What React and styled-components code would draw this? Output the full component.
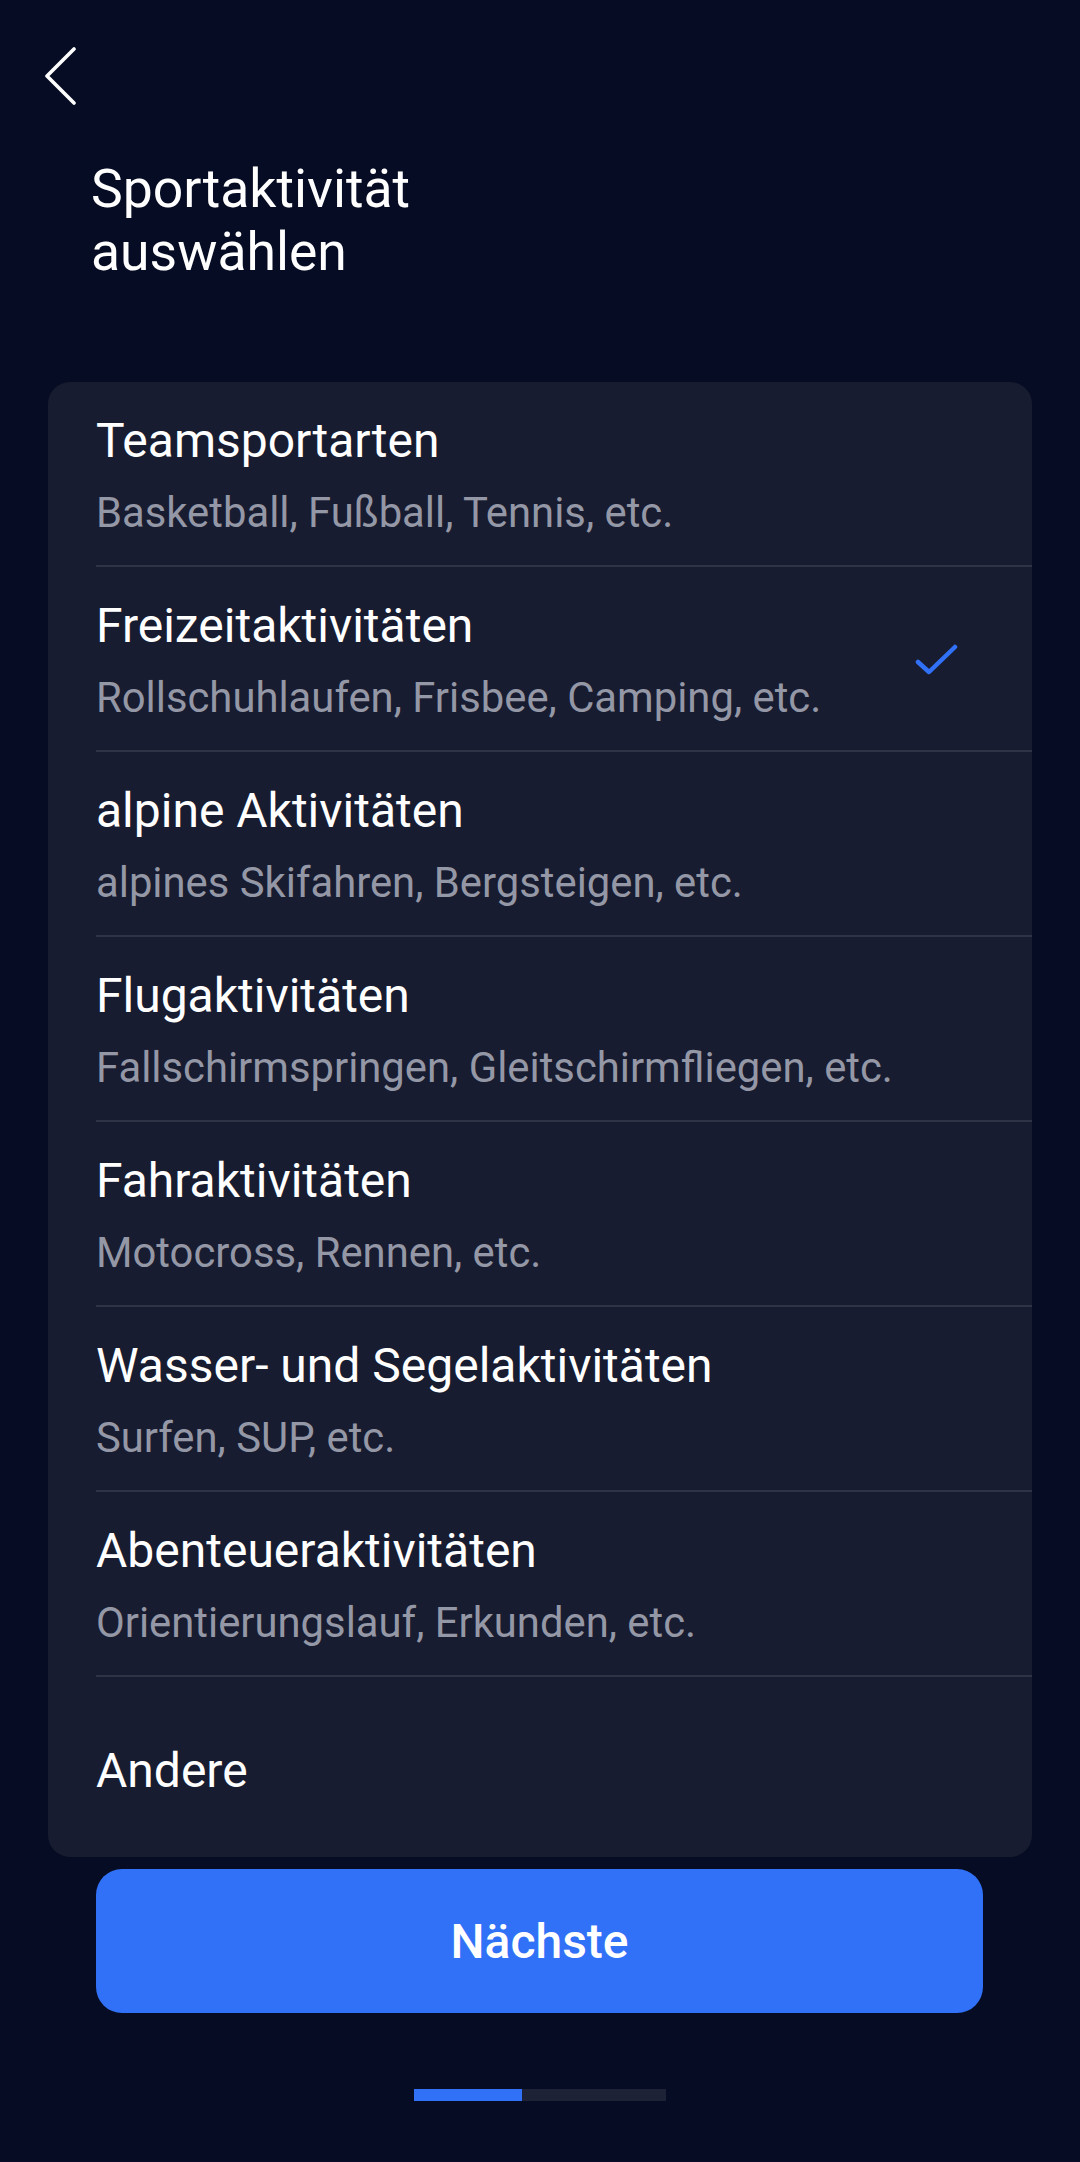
import React from "react"
import styled, { createGlobalStyle } from "styled-components"

const colors = {
  bg: "#060c23",
  card: "#181c30",
  divider: "#2e3346",
  white: "#ffffff",
  gray: "#9497a5",
  blue: "#3171f7",
  track: "#1e2236",
}

const GlobalStyle = createGlobalStyle`
  html, body {
    margin: 0;
    padding: 0;
    background: ${colors.bg};
  }
  body {
    font-family: Roboto, "Noto Sans", "Liberation Sans", sans-serif;
    color: ${colors.white};
  }
  * { box-sizing: border-box; }
`

const Page = styled.div`
  width: 1080px;
  min-height: 2162px;
  background: ${colors.bg};
  display: flex;
  flex-direction: column;
  padding: 48px 48px 0;

  & > * {
    flex-shrink: 0;
  }
`

const BackButton = styled.button`
  width: 40px;
  height: 56px;
  padding: 0;
  margin-left: -7px;
  border: none;
  background: transparent;
  display: flex;
  align-items: center;
  justify-content: center;
  cursor: pointer;
`

const Title = styled.h1`
  margin: 53px 0 0 43px;
  font-size: 53.5px;
  line-height: 63px;
  font-weight: 400;
  color: ${colors.white};
`

const Card = styled.div`
  margin-top: 99px;
  background: ${colors.card};
  border-radius: 22px;
  display: flex;
  flex-direction: column;
  padding-left: 48px;
`

const Row = styled.div`
  position: relative;
  display: flex;
  flex-direction: column;
  justify-content: ${(p) => (p.$single ? "center" : "flex-start")};
  height: ${(p) => (p.$single ? "180px" : "185px")};
  padding: ${(p) => (p.$single ? "8px 0 0" : "31px 0 0")};
  border-bottom: ${(p) => (p.$last ? "none" : `2px solid ${colors.divider}`)};
`

const RowTitle = styled.div`
  font-size: 48px;
  line-height: 56px;
  color: ${colors.white};
`

const RowSub = styled.div`
  margin-top: 20px;
  font-size: 41.8px;
  line-height: 48px;
  color: ${colors.gray};
`

const Check = styled.svg`
  position: absolute;
  right: 73px;
  top: 76px;
`

const NextButton = styled.button`
  margin: 12px 49px 0 48px;
  height: 144px;
  border: none;
  border-radius: 26px;
  background: ${colors.blue};
  color: ${colors.white};
  font-family: Roboto, "Noto Sans", "Liberation Sans", sans-serif;
  font-size: 48px;
  font-weight: 500;
`

const Progress = styled.div`
  margin: 76px auto 0;
  width: 252px;
  height: 12px;
  background: ${colors.track};
  display: flex;
`

const ProgressFill = styled.div`
  height: 100%;
  background: ${colors.blue};
`

const items = [
  { title: "Teamsportarten", sub: "Basketball, Fußball, Tennis, etc." },
  { title: "Freizeitaktivitäten", sub: "Rollschuhlaufen, Frisbee, Camping, etc.", selected: true },
  { title: "alpine Aktivitäten", sub: "alpines Skifahren, Bergsteigen, etc." },
  { title: "Flugaktivitäten", sub: "Fallschirmspringen, Gleitschirmfliegen, etc." },
  { title: "Fahraktivitäten", sub: "Motocross, Rennen, etc." },
  { title: "Wasser- und Segelaktivitäten", sub: "Surfen, SUP, etc." },
  { title: "Abenteueraktivitäten", sub: "Orientierungslauf, Erkunden, etc." },
  { title: "Andere" },
]

export default function App() {
  const step = 3
  const steps = 7
  return (
    <>
      <GlobalStyle />
      <Page>
        <BackButton aria-label="Zurück">
          <svg width="34" height="58" viewBox="0 0 34 58" fill="none">
            <path d="M30 2 L3 29 L30 56" stroke="#fff" strokeWidth="3.6" strokeLinecap="round" strokeLinejoin="round" />
          </svg>
        </BackButton>
        <Title>
          Sportaktivität
          <br />
          auswählen
        </Title>
        <Card>
          {items.map((item, i) => (
            <Row key={item.title} $single={!item.sub} $last={i === items.length - 1}>
              <RowTitle>{item.title}</RowTitle>
              {item.sub && <RowSub>{item.sub}</RowSub>}
              {item.selected && (
                <Check width="44" height="34" viewBox="0 0 44 34" fill="none">
                  <path d="M3 19 L14 29 L40 4" stroke={colors.blue} strokeWidth="4.5" strokeLinecap="round" strokeLinejoin="round" />
                </Check>
              )}
            </Row>
          ))}
        </Card>
        <NextButton>Nächste</NextButton>
        <Progress>
          <ProgressFill style={{ width: `${(step / steps) * 100}%` }} />
        </Progress>
      </Page>
    </>
  )
}
